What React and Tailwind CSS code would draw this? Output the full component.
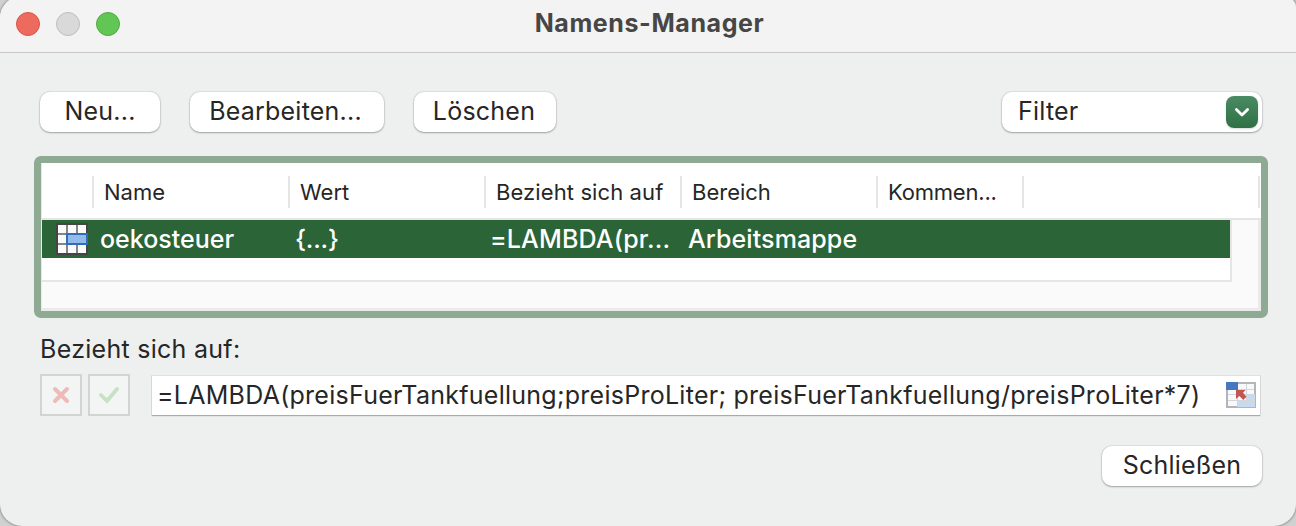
const buttonFace =
  "flex h-10 items-center rounded-[10px] bg-white text-[25px] tracking-[0.22px] shadow-[0_0_1px_1px_rgba(0,0,0,0.07),0_1px_2px_rgba(0,0,0,0.28)]";

function RangeIcon() {
  return (
    <svg width="32" height="32" viewBox="0 0 32 32" className="shrink-0">
      <rect x="1" y="1" width="30" height="30" fill="#fafafa" stroke="#454545" strokeWidth="2" />
      <path d="M11 2V30M21 2V30M2 11H30M2 21H30" stroke="#858585" strokeWidth="2" />
      <rect x="11" y="11" width="20" height="10" fill="#91bbe8" stroke="#2f6cba" strokeWidth="2" />
    </svg>
  );
}

function PickRangeIcon() {
  return (
    <svg width="30" height="26" viewBox="0 0 30 26" className="shrink-0">
      <rect x="1" y="1" width="28" height="24" fill="#f8f9fa" stroke="#b3b5b8" strokeWidth="2" />
      <path d="M20 12h9v13H11v-7h9z" fill="#c8daef" />
      <path d="M11.500 2V24M20.500 2V24M2 7.500H28M2 12.500H28M2 18.500H28" stroke="#d3d7dc" strokeWidth="1" />
      <rect width="12" height="8" fill="#4678bf" />
      <path d="M10 8h9.500l-2.500 2.700 3.500 4-3.200 3.300-4-4-3.300 3z" fill="#c05753" />
    </svg>
  );
}

function HeaderCell({ className = "", children }) {
  return <div className={`h-8 shrink-0 border-l-2 border-[#e5e5e5] pl-[10px] leading-8 ${className}`}>{children}</div>;
}

export default function App() {
  return (
    <div className="h-[526px] w-[1296px] overflow-hidden bg-[#d0d1d1] font-['Inter','Liberation_Sans',sans-serif] text-[#262626]">
      <div className="-mt-1 h-[530px] w-[1296px] overflow-hidden rounded-[22px] rounded-tr-[12px] bg-[#eef0ef] shadow-[0_0_3px_rgba(0,0,0,0.55)]">
        <header className="flex h-[57px] items-center border-b border-[#c8c8c8] bg-[#f3f3f3] px-4 pt-1">
          <div className="flex flex-1 gap-4 pb-[4px]">
            <span className="size-6 rounded-full border border-[#d95549] bg-[#ec6a5e]" />
            <span className="size-6 rounded-full border border-[#bdbdbd] bg-[#d9d9d9]" />
            <span className="size-6 rounded-full border border-[#50aa3f] bg-[#62c655]" />
          </div>
          <h1 className="pb-[6px] pl-[3px] text-[25px] font-bold leading-8 tracking-[0.6px] text-[#464646]">Namens-Manager</h1>
          <div className="flex-1" />
        </header>

        <div className="flex justify-between pt-[39px] pr-[34px] pl-10">
          <div className="flex gap-[30px]">
            <button className={`${buttonFace} w-[120px] justify-center`}>Neu...</button>
            <button className={`${buttonFace} w-[194px] justify-center pr-[3px]`}>Bearbeiten...</button>
            <button className={`${buttonFace} w-[142px] justify-center pr-[2px]`}>Löschen</button>
          </div>
          <button className={`${buttonFace} w-[260px] justify-between pr-1 pl-4`}>
            <span>Filter</span>
            <span className="flex size-8 items-center justify-center rounded-[8px] bg-linear-to-b from-[#4b8b65] to-[#2f7044] shadow-[0_1px_2px_rgba(0,0,0,0.15)]">
              <svg width="16" height="10" viewBox="0 0 16 10" fill="none" stroke="white" strokeWidth="2.800" strokeLinecap="round" strokeLinejoin="round">
                <path d="M2.400 2.500l5.600 5.500 5.600-5.500" />
              </svg>
            </span>
          </button>
        </div>

        <section className="mt-6 ml-[34px] h-[162px] w-[1234px] rounded-[7px] border-[7px] border-[#8eaa92] bg-[#eaeaea] pl-px">
          <div className="flex h-[57px] w-[1219px] border-b-2 border-[#e5e5e5] bg-white pt-[13px] text-[22px]">
            <div className="w-[50px] shrink-0" />
            <HeaderCell className="w-[196px]">Name</HeaderCell>
            <HeaderCell className="w-[196px]">Wert</HeaderCell>
            <HeaderCell className="w-[196px] tracking-[0.1px]">Bezieht sich auf</HeaderCell>
            <HeaderCell className="w-[196px]">Bereich</HeaderCell>
            <HeaderCell className="w-[146px] tracking-[-0.2px]">Kommen...</HeaderCell>
            <HeaderCell className="w-[236px]" />
            <HeaderCell className="w-[2px] pl-0" />
          </div>
          <div className="h-[88px] w-[1216px] bg-[#fafafa]">
            <div className="h-[62px] w-[1190px] border-r-2 border-b-2 border-[#e5e5e5] bg-white">
              <div className="flex h-[38px] items-center bg-[#2b6436] pl-[14px] text-[25px] font-medium text-white">
                <RangeIcon />
                <span className="w-[196px] pt-[2px] pl-[12px]">oekosteuer</span>
                <span className="w-[196px] pt-[2px] pl-[11px] tracking-[-0.2px]">{"{...}"}</span>
                <span className="w-[196px] pt-[2px] pl-[10px] tracking-[0.15px]">=LAMBDA(pr...</span>
                <span className="pt-[2px] pl-[12px] tracking-[0.1px]">Arbeitsmappe</span>
              </div>
            </div>
          </div>
        </section>

        <p className="mt-[13px] ml-[40px] text-[25px] leading-9 tracking-[0.28px]">Bezieht sich auf:</p>

        <div className="mt-[7px] flex h-[42px] items-center pl-10">
          <span className="flex size-[42px] items-center justify-center border-2 border-[#d2d4d3] bg-[#f3f5f4]">
            <svg width="18" height="18" viewBox="0 0 18 18" stroke="#edbcb9" strokeWidth="4" strokeLinecap="round">
              <path d="M3 3l12 12M15 3L3 15" />
            </svg>
          </span>
          <span className="ml-[6px] flex size-[42px] items-center justify-center border-2 border-[#d2d4d3] bg-[#f3f5f4]">
            <svg width="20" height="18" viewBox="0 0 20 18" fill="none" stroke="#c7e1c4" strokeWidth="3.800" strokeLinecap="round">
              <path d="M2 9l6 6L18 3" />
            </svg>
          </span>
          <div className="ml-[22px] flex h-[39px] w-[1108px] items-center justify-between bg-white pr-1 pl-[5px] shadow-[0_1px_1px_#aaa,0_0_0_1px_#dfe1e0]">
            <span className="pt-[2px] text-[25px] tracking-[0.265px] whitespace-pre">=LAMBDA(preisFuerTankfuellung;preisProLiter; preisFuerTankfuellung/preisProLiter*7)</span>
            <PickRangeIcon />
          </div>
        </div>

        <footer className="mt-[30px] flex justify-end pr-[34px]">
          <button className={`${buttonFace} w-[160px] justify-center`}>Schließen</button>
        </footer>
      </div>
    </div>
  );
}
